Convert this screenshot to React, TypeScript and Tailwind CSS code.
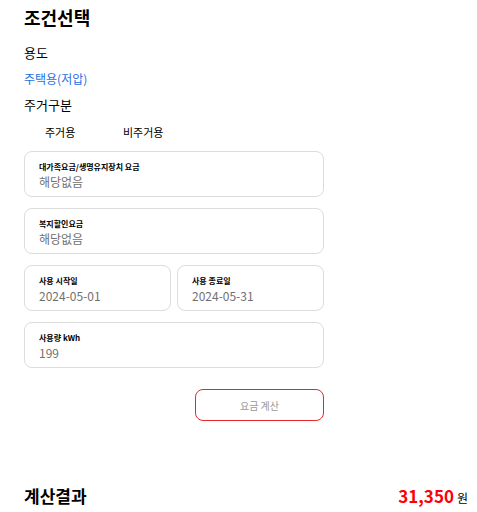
const font = { fontFamily: '"Noto Sans CJK KR", "Noto Sans", sans-serif' };

function Field({ label, value }: { label: string; value: string }) {
  return (
    <div className="flex h-[46px] flex-col justify-center rounded-lg border border-[#dcdcdc] px-[14px] pt-[3px]">
      <div className="text-[8px] font-bold leading-[12px] text-black">{label}</div>
      <div className="text-[12px] leading-[18px] text-[#707070]">{value}</div>
    </div>
  );
}

export default function App() {
  return (
    <div className="min-h-[512px] bg-white pl-6 pr-[9px] text-black" style={font}>
      <div className="w-[300px]">
        <h2 className="pt-[5px] text-[18px] font-bold leading-[24px]">조건선택</h2>
        <div className="mt-[15px] text-[13px] leading-[18px]">용도</div>
        <div className="mt-[8px] text-[12px] leading-[18px] text-[#1a6fe8]">주택용(저압)</div>
        <div className="mt-[8px] text-[13px] leading-[18px]">주거구분</div>
        <div className="mt-[10px] flex pl-[21px] text-[11px] leading-[16px]">
          <span className="w-[78px]">주거용</span>
          <span>비주거용</span>
        </div>

        <div className="mt-[11px] flex flex-col gap-[11px]">
          <Field label="대가족요금/생명유지장치 요금" value="해당없음" />
          <Field label="복지할인요금" value="해당없음" />
          <div className="flex gap-[6px]">
            <div className="flex-1">
              <Field label="사용 시작일" value="2024-05-01" />
            </div>
            <div className="flex-1">
              <Field label="사용 종료일" value="2024-05-31" />
            </div>
          </div>
          <Field label="사용량 kWh" value="199" />
        </div>

        <div className="mt-[21px] flex justify-end">
          <button className="h-[32px] w-[129px] rounded-lg border border-[#e8262d] bg-white text-[10px] text-[#999]">
            요금 계산
          </button>
        </div>
      </div>

      <div className="mt-[62px] flex items-center justify-between">
        <div className="text-[17px] font-bold leading-[24px]">계산결과</div>
        <div className="flex items-baseline gap-[3px]">
          <span className="text-[17px] font-bold text-[#ff0000]">31,350</span>
          <span className="text-[12px]">원</span>
        </div>
      </div>
    </div>
  );
}
